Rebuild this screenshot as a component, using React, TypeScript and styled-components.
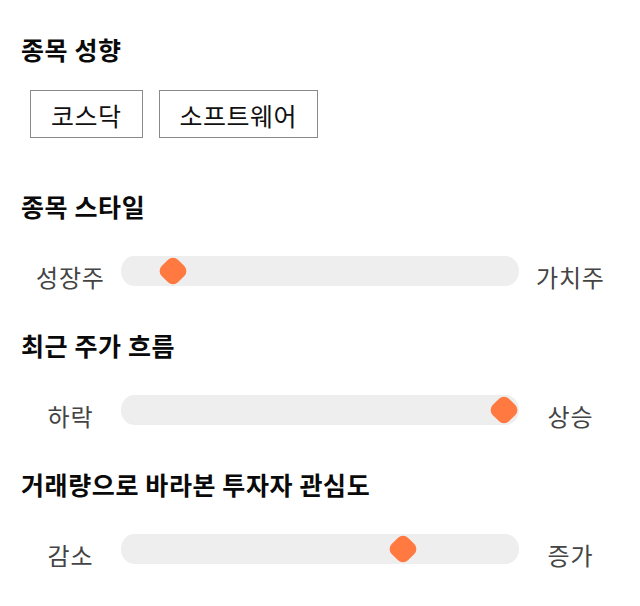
import React from "react";
import styled, { createGlobalStyle } from "styled-components";

const GlobalStyle = createGlobalStyle`
  body {
    margin: 0;
    background: #fff;
    font-family: "Noto Sans CJK KR", "Noto Sans", sans-serif;
  }
`;

const sliders = [
    { title: "종목 스타일", left: "성장주", right: "가치주", value: 10 },
    { title: "최근 주가 흐름", left: "하락", right: "상승", value: 100 },
    { title: "거래량으로 바라본 투자자 관심도", left: "감소", right: "증가", value: 72.5 },
];

export default function App() {
    return (
        <>
            <GlobalStyle />
            <Page>
                <Section $gap={25} $after={52}>
                    <Heading>종목 성향</Heading>
                    <TagRow>
                        <Tag>코스닥</Tag>
                        <Tag>소프트웨어</Tag>
                    </TagRow>
                </Section>
                {sliders.map((s) => (
                    <Section key={s.title} $gap={34} $after={43}>
                        <Heading>{s.title}</Heading>
                        <SliderRow>
                            <EndLabel>{s.left}</EndLabel>
                            <Track>
                                <ThumbLane>
                                    <Thumb style={{ left: `${s.value}%` }} />
                                </ThumbLane>
                            </Track>
                            <EndLabel>{s.right}</EndLabel>
                        </SliderRow>
                    </Section>
                ))}
            </Page>
        </>
    );
}

const Page = styled.div`
    padding: 33px 20px 0;
    display: flex;
    flex-direction: column;
`;

const Section = styled.section<{ $gap: number; $after: number }>`
    display: flex;
    flex-direction: column;
    gap: ${(p) => p.$gap}px;
    margin-bottom: ${(p) => p.$after}px;
`;

const Heading = styled.h2`
    margin: 0;
    font-size: 25px;
    letter-spacing: 0.6px;
    line-height: 32px;
    font-weight: 700;
    color: #0a0a0a;
    padding-left: 1px;
`;

const TagRow = styled.div`
    display: flex;
    gap: 16px;
    padding-left: 10px;
`;

const Tag = styled.div`
    height: 48px;
    box-sizing: border-box;
    border: 1px solid #8a8a8a;
    padding: 2px 20px 0;
    display: flex;
    align-items: center;
    font-size: 25px;
    letter-spacing: 0.5px;
    color: #111;
`;

const SliderRow = styled.div`
    display: grid;
    grid-template-columns: 100px 1fr 100px;
    grid-template-rows: 30px;
    align-items: center;
    height: 30px;
`;

const EndLabel = styled.span`
    text-align: center;
    font-size: 24px;
    letter-spacing: 0.8px;
    padding-left: 0.8px;
    color: #444;
    line-height: 30px;
    padding-top: 12px;
`;

const Track = styled.div`
    height: 30px;
    background: #eeeeee;
    border-radius: 13px / 15px;
    margin-left: 1px;
    margin-right: 1px;
    position: relative;
`;

const ThumbLane = styled.div`
    position: absolute;
    top: 0;
    bottom: 0;
    left: 15px;
    right: 15px;
`;

const Thumb = styled.div`
    position: absolute;
    top: 50%;
    width: 23px;
    height: 23px;
    background: #ff7940;
    border-radius: 7px;
    transform: translate(-50%, -50%) rotate(45deg);
`;
